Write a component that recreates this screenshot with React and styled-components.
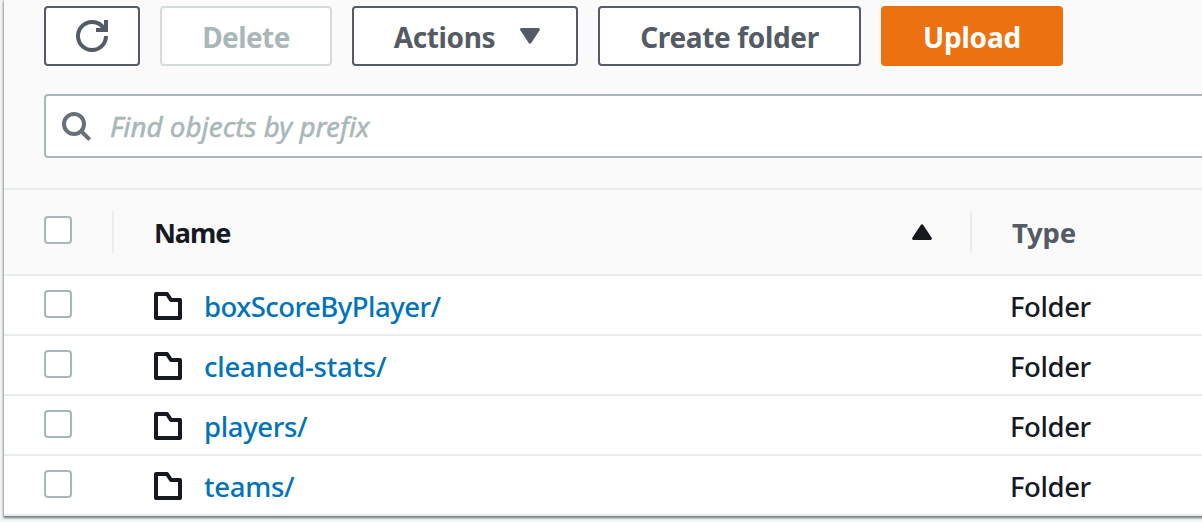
import React from "react";
import styled, { createGlobalStyle } from "styled-components";

const GlobalStyle = createGlobalStyle`
  * { box-sizing: border-box; }
  body {
    margin: 0;
    overflow: hidden;
    background: #f2f3f3;
    font-family: "Noto Sans", "Open Sans", sans-serif;
    color: #16191f;
  }
`;

const Page = styled.main`
  width: 100%;
  height: 522px;
  padding-left: 4px;
  overflow: hidden;
`;

const Panel = styled.section`
  height: 516px;
  margin-right: -20px;
  background: #fff;
  box-shadow: 0 1px 2px 1px rgba(0, 28, 36, 0.28), 0 2px 2px 0 rgba(0, 28, 36, 0.36);
`;

const PanelHeader = styled.header`
  height: 188px;
  padding: 6px 0 0 40px;
  background: #fafafa;
`;

const Toolbar = styled.div`
  display: flex;
  gap: 20px;
  margin-bottom: 28px;
`;

const tones = {
  normal: { line: "#545b64", fill: "#fff", text: "#545b64" },
  disabled: { line: "#d5dbdb", fill: "#fff", text: "#aab7b8" },
  primary: { line: "#ec7211", fill: "#ec7211", text: "#fff" },
};

const Button = styled.button`
  display: flex;
  align-items: center;
  justify-content: center;
  gap: ${(p) => p.$gap || 0}px;
  width: ${(p) => p.$width}px;
  height: 60px;
  padding: 0;
  border: 2px solid ${(p) => tones[p.$tone || "normal"].line};
  border-radius: 4px;
  background: ${(p) => tones[p.$tone || "normal"].fill};
  color: ${(p) => tones[p.$tone || "normal"].text};
  font: 700 28px/36px "Noto Sans", sans-serif;
  letter-spacing: ${(p) => p.$spacing || 0}px;
  white-space: nowrap;
`;

const ButtonText = styled.span`
  padding: 2px 0 0 ${(p) => p.$inset || 0}px;
`;

const SearchBox = styled.label`
  display: flex;
  align-items: center;
  gap: 18px;
  height: 64px;
  padding-left: 14px;
  border: 2px solid #aab7b8;
  border-radius: 4px;
  background: #fff;
`;

const SearchInput = styled.input`
  flex: 1;
  padding: 0;
  border: 0;
  outline: 0;
  background: none;
  font: italic 400 27.8px/36px "Noto Sans", sans-serif;
  &::placeholder { color: #aab7b8; opacity: 1; -webkit-text-stroke: 0.5px #aab7b8; }
`;

const Row = styled.div`
  display: grid;
  grid-template-columns: 110px 858px 1fr;
  height: 60px;
  border-bottom: 2px solid #eaeded;
`;

const HeadRow = styled(Row)`
  height: 88px;
  border-top: 2px solid #eaeded;
  background: #fafafa;
`;

const CheckCell = styled.div`
  padding: ${(p) => p.$top}px 0 0 40px;
`;

const HeadCheckCell = styled(CheckCell)`
  align-self: center;
  height: 42px;
  border-right: 2px solid #eaeded;
`;

const Checkbox = styled.input`
  display: block;
  appearance: none;
  width: 28px;
  height: 28px;
  margin: 0;
  border: 2px solid #aab7b8;
  border-radius: 4px;
  background: #fff;
`;

const HeadCell = styled.div`
  display: flex;
  align-items: center;
  align-self: center;
  justify-content: space-between;
  height: 42px;
  padding: 0 38px 0 40px;
  font-size: ${(p) => p.$size}px;
  line-height: 42px;
  font-weight: 700;
  color: ${(p) => p.$color || "#16191f"};
  letter-spacing: ${(p) => p.$spacing}px;
  ${(p) => p.$divider && "border-right: 2px solid #eaeded;"}
`;

const HeadText = styled.span`
  padding-top: 2px;
`;

const NameCell = styled.div`
  display: flex;
  align-items: center;
  gap: 22px;
  padding: 2px 0 0 40px;
`;

const Link = styled.a`
  padding-top: 2px;
  color: #0073bb;
  font-size: 27.5px;
  line-height: 36px;
  font-weight: 500;
  letter-spacing: ${(p) => p.$spacing}px;
`;

const TypeCell = styled.div`
  padding: 13px 0 0 38px;
  font-size: 27.5px;
  line-height: 36px;
  font-weight: 500;
  letter-spacing: -0.4px;
`;

const RefreshIcon = () => (
  <svg width="32" height="32" viewBox="0 0 16 16" fill="none" stroke="#545b64" strokeWidth="2">
    <path d="M15 8c0 3.87-3.13 7-7 7s-7-3.13-7-7 3.13-7 7-7c2.79 0 5.2 1.63 6.33 4" />
    <path d="M10 5h5V0" />
  </svg>
);

const SearchIcon = () => (
  <svg width="32" height="32" viewBox="0 0 32 32" fill="none" stroke="#687078" strokeWidth="4">
    <circle cx="14" cy="14" r="10" />
    <path d="M21 21l8.7 8.7" />
  </svg>
);

const Triangle = ({ up }) => (
  <svg width="20" height="16" viewBox="0 0 20 16" fill="currentColor" stroke="currentColor" strokeWidth="3" strokeLinejoin="round">
    <path d={up ? "M10 1.8L18.4 14.5H1.6z" : "M10 14.2L1.6 1.5h16.8z"} />
  </svg>
);

const FolderIcon = () => (
  <svg width="28" height="28" viewBox="0 0 28 28" fill="none" stroke="#16191f" strokeWidth="4" strokeLinejoin="round">
    <path d="M2 26V2h11l4 6h9v18z" />
  </svg>
);

const folders = [
  { name: "boxScoreByPlayer/", spacing: -0.52 },
  { name: "cleaned-stats/", spacing: -0.22 },
  { name: "players/", spacing: -0.35 },
  { name: "teams/", spacing: -0.3 },
];

export default function App() {
  return (
    <Page>
      <GlobalStyle />
      <Panel>
        <PanelHeader>
          <Toolbar>
            <Button $width={96} aria-label="Refresh"><RefreshIcon /></Button>
            <Button $width={172} $tone="disabled" $spacing={-0.6}><ButtonText>Delete</ButtonText></Button>
            <Button $width={226} $gap={25} $spacing={-0.4}><ButtonText $inset={4}>Actions</ButtonText><Triangle /></Button>
            <Button $width={263} $spacing={-0.35}><ButtonText>Create folder</ButtonText></Button>
            <Button $width={182} $tone="primary" $spacing={-0.2}><ButtonText>Upload</ButtonText></Button>
          </Toolbar>
          <SearchBox>
            <SearchIcon />
            <SearchInput placeholder="Find objects by prefix" />
          </SearchBox>
        </PanelHeader>
        <HeadRow>
          <HeadCheckCell $top={5}><Checkbox type="checkbox" /></HeadCheckCell>
          <HeadCell $divider $size={27} $spacing={-1.1}><HeadText>Name</HeadText><Triangle up /></HeadCell>
          <HeadCell $color="#545b64" $size={27.5} $spacing={-0.2}><HeadText>Type</HeadText></HeadCell>
        </HeadRow>
        {folders.map((f) => (
          <Row key={f.name}>
            <CheckCell $top={14}><Checkbox type="checkbox" /></CheckCell>
            <NameCell><FolderIcon /><Link $spacing={f.spacing}>{f.name}</Link></NameCell>
            <TypeCell>Folder</TypeCell>
          </Row>
        ))}
      </Panel>
    </Page>
  );
}
